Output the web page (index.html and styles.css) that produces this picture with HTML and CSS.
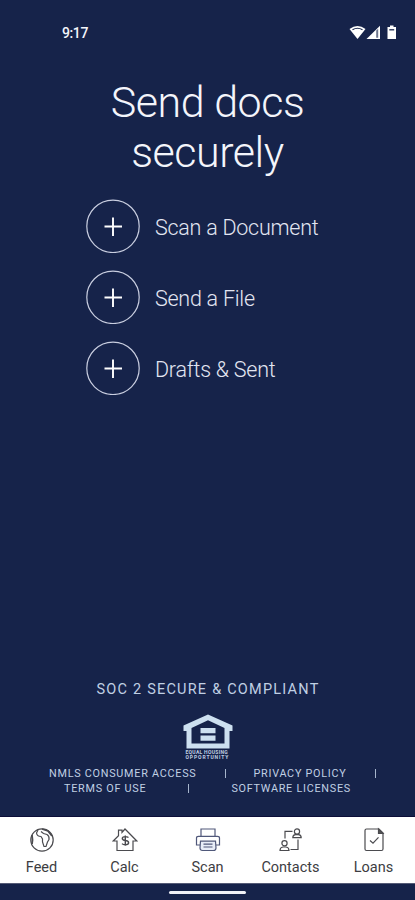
FILE: index.html
```html
<!DOCTYPE html>
<html lang="en">
<head>
    <meta charset="UTF-8">
    <meta name="viewport" content="width=device-width, initial-scale=1.0">
    <title>Send docs securely</title>
    <link rel="stylesheet" href="styles.css">
</head>
<body>
    <div class="status-bar">
        <span class="time">9:17</span>
        <svg class="status-icons" width="48" height="16" viewBox="0 0 48 16">
            <path d="M0.5 4 Q8.500 -2 16.500 4 L8.500 14 Z" fill="#fff"/>
            <path d="M3.500 4.800 Q8.500 1.800 13.500 4.800" fill="none" stroke="#16234a" stroke-width="1.100"/>
            <path d="M17.500 14 L31 0.800 V14 Z" fill="#fff"/>
            <path d="M27.200 5.500 L29.200 3.800 V12.800 H27.200 Z" fill="#6d768e"/>
            <path d="M38.500 2 H41 V0.500 H44.500 V2 H47 V14 H38.500 Z" fill="#fff"/>
            <path d="M40.300 4.800 H45.200" stroke="#16234a" stroke-width="1.300"/>
        </svg>
    </div>

    <main>
        <h1>Send docs<br>securely</h1>
        <div class="actions">
            <button class="action">
                <svg width="54" height="54" viewBox="0 0 54 54"><circle cx="27" cy="27.300" r="26.200"/><path d="M18.500 27.500H36M27 18.500V37"/></svg>
                <span>Scan a Document</span>
            </button>
            <button class="action">
                <svg width="54" height="54" viewBox="0 0 54 54"><circle cx="27" cy="27.300" r="26.200"/><path d="M18.500 27.500H36M27 18.500V37"/></svg>
                <span>Send a File</span>
            </button>
            <button class="action">
                <svg width="54" height="54" viewBox="0 0 54 54"><circle cx="27" cy="27.300" r="26.200"/><path d="M18.500 27.500H36M27 18.500V37"/></svg>
                <span>Drafts &amp; Sent</span>
            </button>
        </div>
    </main>

    <footer>
        <div class="compliant">SOC 2 SECURE &amp; COMPLIANT</div>
        <div class="housing">
            <svg width="50" height="36" viewBox="0 0 50 36">
                <path fill-rule="evenodd" d="M25 0.500 L49.500 11.500 V17 H46.500 V34.500 H3.500 V17 H0.500 V11.500 Z M25 6.300 L8.500 14 V29.500 H41.500 V14 Z"/>
                <path d="M17.500 14H32.500V19.300H17.500ZM17.500 21.500H32.500V26.800H17.500Z"/>
            </svg>
            <div class="housing-text"><span>EQUAL HOUSING</span><span class="wide">OPPORTUNITY</span></div>
        </div>
        <div class="links links-top">
            <a>NMLS CONSUMER ACCESS</a><i></i><a>PRIVACY POLICY</a><i></i>
        </div>
        <div class="links links-bottom">
            <a>TERMS OF USE</a><i></i><a>SOFTWARE LICENSES</a>
        </div>
    </footer>

    <nav>
        <a class="tab">
            <svg width="26" height="26" viewBox="0 0 26 26">
                <circle cx="13" cy="13" r="11.200"/>
                <path d="M9 3L7.500 6Q8 9.500 12 9.500L13.500 12V15L15 19.500H17L18.500 15L20 12.500Q20.500 9 18 7.500L14.500 6.500L12 4.500"/>
                <path d="M13 2L19 4L23 9M3 8L3.500 13L3 17" stroke-width="1.800"/>
            </svg>
            <span>Feed</span>
        </a>
        <a class="tab">
            <svg width="26" height="26" viewBox="0 0 26 26">
                <path d="M5 14H1.200L6.500 8.800V3.200H10V5.500L13 2L24.800 14H21V23.500H5Z"/>
                <path d="M16.500 10.500Q15.300 9.600 13 9.600Q10.300 9.600 10.300 11.500Q10.300 13.200 13.300 13.500Q16.600 13.800 16.600 15.700Q16.600 17.700 13.300 17.700Q11 17.700 10 16.600M13.300 8.500V18.800" stroke-width="1.400"/>
            </svg>
            <span>Calc</span>
        </a>
        <a class="tab active">
            <svg width="26" height="26" viewBox="0 0 26 26">
                <path d="M6 9V2H20V9M5 18H1.500V11Q1.500 9.300 3.500 9.300H22.500Q24.500 9.300 24.500 11V18H21"/>
                <path d="M5.500 14.200H20.500L21 21Q21 23.500 18.500 23.500H7.500Q5 23.500 5 21Z" fill="#e8edf8"/>
                <path d="M8.500 17.200H17.500M8.500 20H17.500"/>
            </svg>
            <span>Scan</span>
        </a>
        <a class="tab">
            <svg width="26" height="26" viewBox="0 0 26 26">
                <path d="M7 11.500V4.300H14.500M20 12.500V22.500H12.500"/>
                <circle cx="19" cy="4.500" r="2.600"/>
                <path d="M14.800 10.700Q14.800 8 17.500 7.700H20.500Q23.200 8 23.200 10.700Z"/>
                <circle cx="6.500" cy="16.300" r="2.600"/>
                <path d="M2 23.500Q2 20.300 5 20H8Q11 20.300 11 23.500Z"/>
            </svg>
            <span>Contacts</span>
        </a>
        <a class="tab">
            <svg width="26" height="26" viewBox="0 0 26 26">
                <path d="M5.500 2H18L22 6V22Q22 23.500 20.500 23.500H5.500Q4 23.500 4 22V3.500Q4 2 5.500 2Z"/>
                <path d="M17.500 2V6.500H22Z" fill="#555"/>
                <path d="M9 13.500L12 16.200L17.500 10.300"/>
            </svg>
            <span>Loans</span>
        </a>
    </nav>
    <div class="home-bar"><div class="pill"></div></div>
</body>
</html>
```
FILE: styles.css
```css
* { box-sizing: border-box; }
body { margin: 0; height: 900px; display: flex; flex-direction: column; overflow: hidden; background-color: #16234a; color: #f4f5fb; font-family: Roboto, sans-serif; }

.status-bar { height: 66px; padding: 25px 18px 0 62px; display: flex; justify-content: space-between; align-items: flex-start; }
.time { font-size: 14px; line-height: 17px; font-weight: 500; letter-spacing: -0.4px; }
.status-icons { display: block; }

main { flex: 1; }
h1 { margin: 11px 0 0; font-size: 43px; line-height: 50px; font-weight: 300; letter-spacing: -0.45px; text-align: center; }
.actions { margin: 22px 0 0 86px; display: flex; flex-direction: column; gap: 17px; }
.action { display: flex; align-items: center; gap: 15px; padding: 0; border: none; background: none; color: #e3e6f2; font-family: inherit; font-size: 21.5px; font-weight: 300; letter-spacing: -0.25px; text-align: left; }
.action svg { fill: none; stroke: #c9cee0; stroke-width: 1.2; }
.action path { stroke: #fff; stroke-width: 1.9; }
.action span { padding-top: 3px; }

footer { height: 136px; color: #c0d0e4; }
.compliant { padding-left: 1px; font-size: 14.5px; line-height: 20px; letter-spacing: 1.22px; text-align: center; }
.housing { margin-top: 14px; display: flex; flex-direction: column; align-items: center; }
.housing svg { display: block; fill: #cde0f0; }
.housing-text { width: 44px; font-size: 5px; line-height: 5px; font-weight: 700; white-space: nowrap; }
.housing-text span { display: block; letter-spacing: 0.3px; }
.housing-text .wide { letter-spacing: 0.9px; }
.links { display: flex; align-items: center; font-size: 10.8px; line-height: 15px; letter-spacing: 0.75px; white-space: nowrap; }
.links i { width: 1px; height: 9px; background-color: #a6b5cc; }
.links-top { padding-left: 49px; margin-top: 6px; gap: 28px; }
.links-bottom { padding-left: 64px; gap: 42px; }

nav { height: 68px; display: grid; grid-template-columns: repeat(5, 1fr); border-top: 1px solid #0b0d38; border-bottom: 1px solid #555b76; background-color: #fff; }
.tab { display: flex; flex-direction: column; align-items: center; padding-top: 10px; color: #3d3d42; font-size: 14.5px; line-height: 18px; }
.tab svg { display: block; fill: none; stroke: #4b4b4f; stroke-width: 1.2; margin-bottom: 6px; }
.tab.active svg { stroke: #50587a; }

.home-bar { height: 16px; padding-top: 7px; }
.pill { width: 77px; height: 3px; margin: 0 auto; border-radius: 2px; background-color: #f0f1f7; }
```
